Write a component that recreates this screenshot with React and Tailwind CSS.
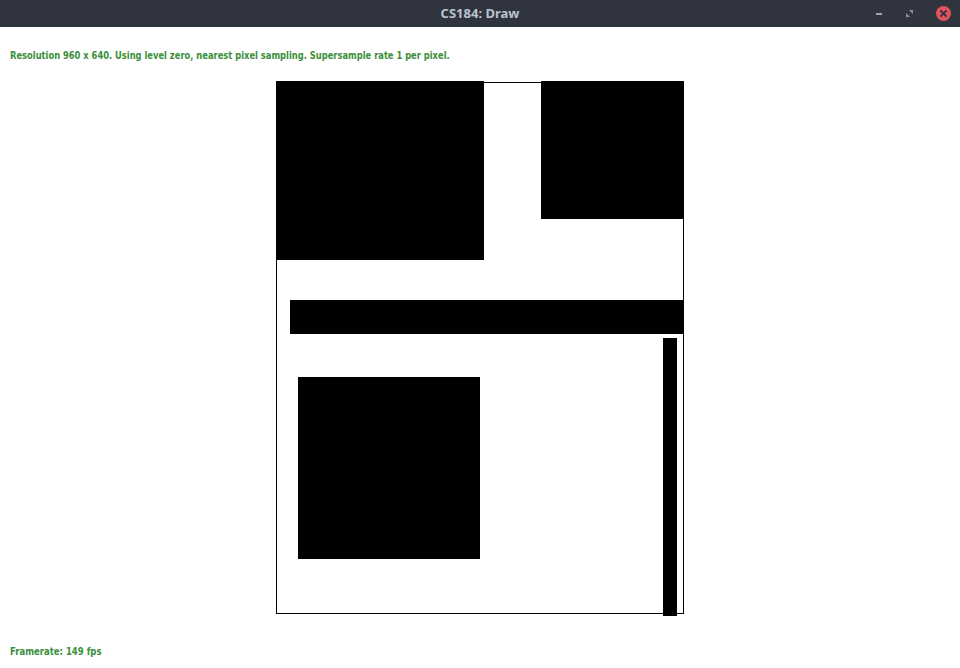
export default function App() {
  const green = "text-[#3b8f3b]";
  return (
    <div className="w-[960px] h-[668px] bg-white overflow-hidden flex flex-col">
      {/* window title bar */}
      <div className="h-[27px] bg-[#2f343f] flex items-center relative shrink-0">
        <div className="flex-1 text-center text-[13px] font-bold text-[#bac3cf] font-['Noto_Sans',sans-serif] leading-none">
          CS184: Draw
        </div>
        <div className="absolute right-[9px] top-[6px] flex items-center">
          <div className="w-[6px] h-[2px] bg-[#a1a7b0] mr-[24px]" />
          <svg width="8" height="8" viewBox="0 0 8 8" className="mr-[22px]">
            <path d="M3 0H7V4Z" fill="#8d939c" />
            <path d="M0 3V7H4Z" fill="#8d939c" />
          </svg>
          <div className="w-[15px] h-[15px] rounded-full bg-[#e0535c] flex items-center justify-center">
            <svg width="7" height="7" viewBox="0 0 7 7">
              <path d="M1 1L6 6M6 1L1 6" stroke="#2f343f" strokeWidth="1.8" strokeLinecap="round" />
            </svg>
          </div>
        </div>
      </div>

      <div className="flex flex-col flex-1">
        <div className="pl-[10px] pt-[22px]">
          <p className={`text-[11px] leading-[13px] font-bold ${green} font-['DejaVu_Sans_Condensed',sans-serif] whitespace-nowrap origin-left scale-x-[0.843]`}>
            Resolution 960 x 640. Using level zero, nearest pixel sampling. Supersample rate 1 per pixel.
          </p>
        </div>

        <div className="flex justify-center mt-[19px]">
          <svg width="408" height="535" viewBox="0 0 408 535" className="block">
            <rect x="0.5" y="1.5" width="407" height="531" fill="none" stroke="#000" strokeWidth="1" />
            <rect x="0" y="0" width="208" height="179" fill="#000" />
            <rect x="265" y="0" width="143" height="138" fill="#000" />
            <rect x="14" y="219" width="394" height="34" fill="#000" />
            <rect x="387" y="257" width="14" height="278" fill="#000" />
            <rect x="22" y="296" width="182" height="182" fill="#000" />
          </svg>
        </div>

        <div className="pl-[10px] mt-[29px]">
          <p className={`text-[11px] leading-[13px] font-bold ${green} font-['DejaVu_Sans_Condensed',sans-serif] whitespace-nowrap origin-left scale-x-[0.86]`}>
            Framerate: 149 fps
          </p>
        </div>
      </div>
    </div>
  );
}
